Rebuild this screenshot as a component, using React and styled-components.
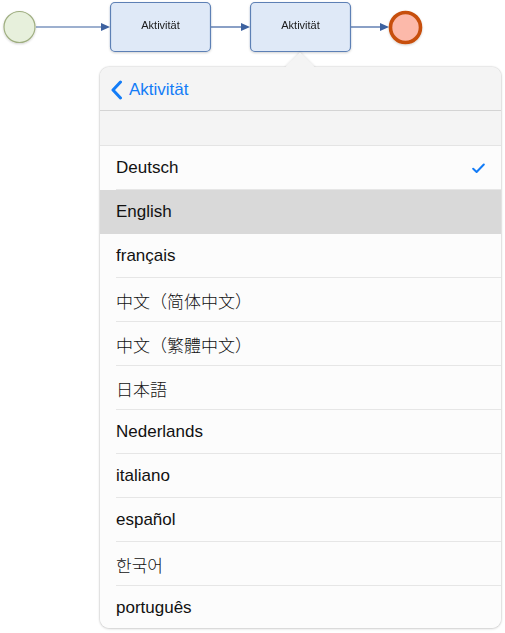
import React from "react";
import styled, { createGlobalStyle } from "styled-components";

const Global = createGlobalStyle`
  html, body { margin: 0; padding: 0; background: #ffffff; }
  body { font-family: "Liberation Sans", Arial, sans-serif; }
`;

const Page = styled.div`
  width: 505px;
  height: 633px;
  position: relative;
  overflow: hidden;
  background: #fff;
`;

const Diagram = styled.svg`
  display: block;
  width: 505px;
  height: 57px;
`;

const Popover = styled.div`
  position: relative;
  margin: 10px 0 0 100px;
  width: 401px;
  height: 561px;
  border-radius: 9px;
  background: #fbfbfb;
  box-shadow: 0 0 2px rgba(0, 0, 0, 0.28), 0 1px 3px rgba(0, 0, 0, 0.12);
`;

const Arrow = styled.div`
  position: absolute;
  top: -10px;
  left: 189px;
  width: 22px;
  height: 22px;
  background: #f4f4f4;
  transform: rotate(45deg);
  box-shadow: -1px -1px 2px rgba(0, 0, 0, 0.08);
`;

const Clip = styled.div`
  position: relative;
  height: 100%;
  border-radius: 9px;
  overflow: hidden;
  display: flex;
  flex-direction: column;
`;

const Header = styled.div`
  flex: none;
  height: 44px;
  box-sizing: border-box;
  padding: 2px 0 0 10px;
  display: flex;
  align-items: center;
  gap: 6px;
  background: #f4f4f4;
  border-bottom: 1px solid #d4d4d4;
  color: #137cf7;
  font-size: 17px;
`;

const Spacer = styled.div`
  flex: none;
  height: 34px;
  background: #f4f4f4;
  border-bottom: 1px solid #e4e4e4;
`;

const Row = styled.div`
  flex: none;
  height: 44px;
  display: flex;
  align-items: center;
  padding-left: 16px;
  padding-right: 16px;
  position: relative;
  background: ${(p) => (p.$selected ? "#d9d9d9" : "#fcfcfc")};
  color: #111;
  font-size: 17px;

  &::after {
    content: "";
    position: absolute;
    left: 16px;
    right: 0;
    bottom: 0;
    height: 1px;
    background: ${(p) => (p.$selected || p.$last ? "transparent" : "#e6e6e6")};
  }
`;

const fonts = {
  ko: '"Noto Sans CJK KR", sans-serif',
  ja: '"Noto Sans CJK JP", sans-serif',
  tc: '"Noto Sans CJK TC", sans-serif',
  sc: '"Noto Sans CJK SC", sans-serif',
};

const Label = styled.span`
  flex: 1;
  font-family: ${(p) => fonts[p.$lang] || '"Liberation Sans", Arial, sans-serif'};
  font-weight: ${(p) => (p.$lang ? 300 : 400)};
`;

const Check = () => (
  <svg width="13" height="11" viewBox="0 0 13 11" style={{ flex: "none" }}>
    <path d="M1.2 5.8 L4.6 9 L11.8 1.5" fill="none" stroke="#137cf7" strokeWidth="2" strokeLinecap="round" strokeLinejoin="round" />
  </svg>
);

const Chevron = () => (
  <svg width="13" height="20" viewBox="0 0 13 20">
    <path d="M10.5 2 L3 10 L10.5 18" fill="none" stroke="#137cf7" strokeWidth="3" strokeLinecap="round" strokeLinejoin="round" />
  </svg>
);

const langs = [
  { t: "Deutsch", check: true },
  { t: "English", selected: true },
  { t: "français" },
  { t: "中文（简体中文）", lang: "sc" },
  { t: "中文（繁體中文）", lang: "tc" },
  { t: "日本語", lang: "ja" },
  { t: "Nederlands" },
  { t: "italiano" },
  { t: "español" },
  { t: "한국어", lang: "ko" },
  { t: "português" },
];

const Task = ({ x, label }) => (
  <g>
    <rect x={x + 0.5} y={2.5} width={100} height={49} rx={4.5} fill="#dfe9f7" stroke="#5d80b5" strokeWidth="1.2" />
    <text x={x + 50.5} y={29} textAnchor="middle" fontSize="11" fontFamily="Liberation Sans, Arial, sans-serif" fill="#1a1a1a">
      {label}
    </text>
  </g>
);

const ArrowHead = ({ x }) => <path d={`M${x - 9} 23 L${x} 27 L${x - 9} 31 Z`} fill="#3d62a0" />;

export default function App() {
  return (
    <Page>
      <Global />
      <Diagram viewBox="0 0 505 57">
        <defs>
          <filter id="sh" x="-20%" y="-20%" width="140%" height="140%">
            <feDropShadow dx="0" dy="1" stdDeviation="1" floodColor="#000" floodOpacity="0.18" />
          </filter>
        </defs>
        <line x1="36" y1="27" x2="103" y2="27" stroke="#3d62a0" strokeWidth="1.2" />
        <ArrowHead x={110} />
        <line x1="211" y1="27" x2="243" y2="27" stroke="#3d62a0" strokeWidth="1.2" />
        <ArrowHead x={250} />
        <line x1="351" y1="27" x2="382" y2="27" stroke="#3d62a0" strokeWidth="1.2" />
        <ArrowHead x={389} />
        <g filter="url(#sh)">
          <circle cx="19.5" cy="27" r="15.5" fill="#e7f0dc" stroke="#9fae80" strokeWidth="1.2" />
          <Task x={110} label="Aktivität" />
          <Task x={250} label="Aktivität" />
          <circle cx="405.5" cy="27.5" r="15" fill="#fcb9aa" stroke="#c7500f" strokeWidth="3.6" />
        </g>
      </Diagram>
      <Popover>
        <Arrow />
        <Clip>
          <Header>
            <Chevron />
            <span>Aktivität</span>
          </Header>
          <Spacer />
          {langs.map((l, i) => (
            <Row key={l.t} $selected={l.selected} $last={i === langs.length - 1}>
              <Label $lang={l.lang}>{l.t}</Label>
              {l.check && <Check />}
            </Row>
          ))}
        </Clip>
      </Popover>
    </Page>
  );
}
